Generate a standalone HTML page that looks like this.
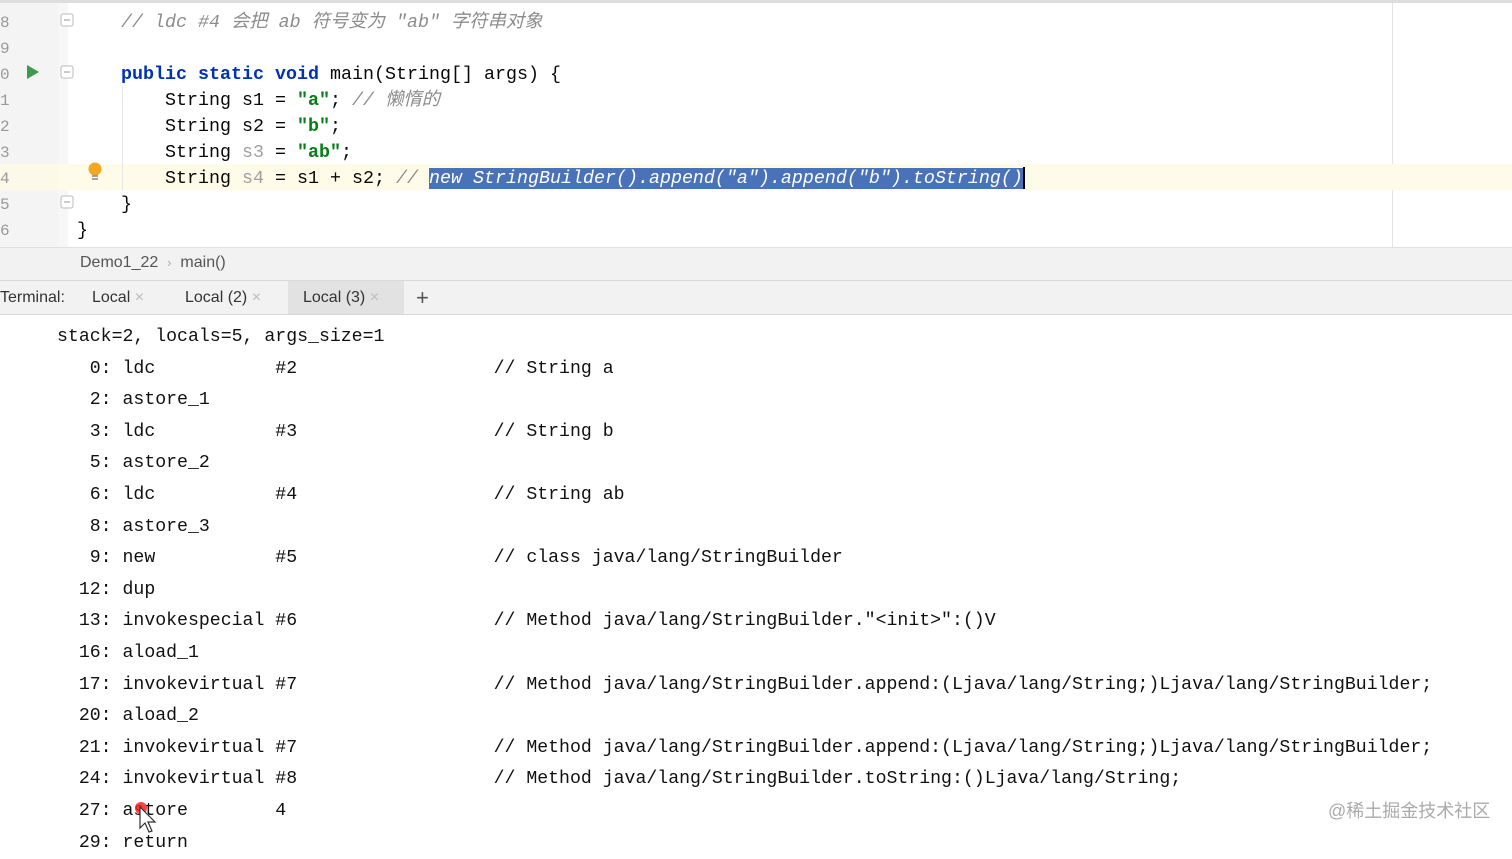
<!DOCTYPE html>
<html><head><meta charset="utf-8"><style>
*{margin:0;padding:0;box-sizing:border-box}
body{width:1512px;height:844px;overflow:hidden;background:#fff;position:relative;font-family:"Liberation Mono","Noto Sans CJK SC",monospace}
.a{position:absolute;white-space:pre}
.ed{font-size:18.33px;color:#080808;line-height:26px}
.ln{font-size:15px;color:#999;font-family:"Liberation Mono",monospace}
.kw{color:#0033b3;font-weight:bold}
.st{color:#067d17;font-weight:bold}
.cm{color:#8c8c8c;font-style:italic}
.gv{color:#a0a0a0}
.t{font-size:18.2px;color:#111;line-height:20px}
.ui{font-family:"Liberation Sans",sans-serif;font-size:16px;color:#444}
</style></head><body>
<div class="a" style="left:0;top:0;width:1512px;height:3px;background:#ddd"></div>
<div class="a" style="left:0;top:3px;width:58px;height:244px;background:#f4f4f4"></div>
<div class="a" style="left:58px;top:3px;width:10px;height:244px;background:#f7f7f7"></div>
<div class="a" style="left:1392px;top:3px;width:1px;height:244px;background:#e4e4e4"></div>
<div class="a" style="left:0;top:164px;width:58px;height:26px;background:#fdf9e8"></div>
<div class="a" style="left:58px;top:164px;width:1454px;height:26px;background:#fefbe8"></div>
<div class="a" style="left:122px;top:86px;width:1px;height:104px;background:#e6e6e6"></div>
<div class="a ln" style="left:0;top:10px;line-height:26px;font-size:16px">8
9
0
1
2
3
4
5
6</div>
<svg class="a" style="left:26px;top:64px" width="14" height="16"><path d="M1 1L13 8L1 15Z" fill="#3d9b4e"/></svg>
<svg class="a" style="left:60px;top:13px" width="14" height="210"><g fill="#fff" stroke="#bbb"><rect x="1" y="1" width="12" height="12" rx="2"/><rect x="1" y="53" width="12" height="12" rx="2"/><rect x="1" y="183" width="12" height="12" rx="2"/></g><g stroke="#999"><path d="M4 7H10M4 59H10M4 189H10"/></g></svg>
<svg class="a" style="left:87px;top:161px" width="16" height="22"><circle cx="8" cy="8" r="6.5" fill="#f5a623"/><path d="M5 15H11M5 18H11" stroke="#888" stroke-width="1.5"/></svg>
<div class="a ed" style="left:77px;top:10px"><span class="cm">    // ldc #4 会把 ab 符号变为 "ab" 字符串对象</span>

    <span class="kw">public static void</span> main(String[] args) {
        String s1 = <span class="st">"a"</span>; <span class="cm">// 懒惰的</span>
        String s2 = <span class="st">"b"</span>;
        String <span class="gv">s3</span> = <span class="st">"ab"</span>;
        String <span class="gv">s4</span> = s1 + s2; <span class="cm">// </span><span class="cm" style="background:#4a72b8;color:#fff">new StringBuilder().append("a").append("b").toString()</span><span style="display:inline-block;width:2px;height:22px;background:#000;vertical-align:middle"></span>
    }
}</div>
<div class="a" style="left:0;top:247px;width:1512px;height:33px;background:#f2f2f2;border-top:1px solid #e0e0e0"></div>
<div class="a ui" style="left:80px;top:254px;color:#555">Demo1_22  <span style="color:#aaa;font-size:13px">›</span>  main()</div>
<div class="a" style="left:0;top:280px;width:1512px;height:35px;background:#f2f2f2;border-top:1px solid #d8d8d8;border-bottom:1px solid #d8d8d8"></div>
<div class="a" style="left:288px;top:281px;width:116px;height:33px;background:#e2e2e2"></div>
<div class="a ui" style="left:0;top:289px;color:#333">Terminal:</div>
<div class="a ui" style="left:92px;top:289px;color:#333">Local <span style="color:#bbb">×</span></div>
<div class="a ui" style="left:185px;top:289px;color:#333">Local (2) <span style="color:#bbb">×</span></div>
<div class="a ui" style="left:303px;top:289px;color:#333">Local (3) <span style="color:#bbb">×</span></div>
<div class="a ui" style="left:416px;top:285px;font-size:22px;color:#555">+</div>
<div class="a t" style="left:57px;top:322px;line-height:31.6px">stack=2, locals=5, args_size=1
   0: ldc           #2                  // String a
   2: astore_1
   3: ldc           #3                  // String b
   5: astore_2
   6: ldc           #4                  // String ab
   8: astore_3
   9: new           #5                  // class java/lang/StringBuilder
  12: dup
  13: invokespecial #6                  // Method java/lang/StringBuilder."&lt;init&gt;":()V
  16: aload_1
  17: invokevirtual #7                  // Method java/lang/StringBuilder.append:(Ljava/lang/String;)Ljava/lang/StringBuilder;
  20: aload_2
  21: invokevirtual #7                  // Method java/lang/StringBuilder.append:(Ljava/lang/String;)Ljava/lang/StringBuilder;
  24: invokevirtual #8                  // Method java/lang/StringBuilder.toString:()Ljava/lang/String;
  27: astore        4
  29: return</div>
<div class="a" style="left:135px;top:802px;width:12px;height:12px;border-radius:50%;background:#f22;opacity:.85"></div>
<svg class="a" style="left:139px;top:806px" width="18" height="28"><path d="M1 1V22L6 17L10 26L13 25L9 16H16Z" fill="#fff" stroke="#333" stroke-width="1.2"/></svg>
<div class="a" style="left:1328px;top:797px;font-family:'Liberation Sans','Noto Sans CJK SC',sans-serif;font-size:18px;color:#aaa">@稀土掘金技术社区</div>
</body></html>
